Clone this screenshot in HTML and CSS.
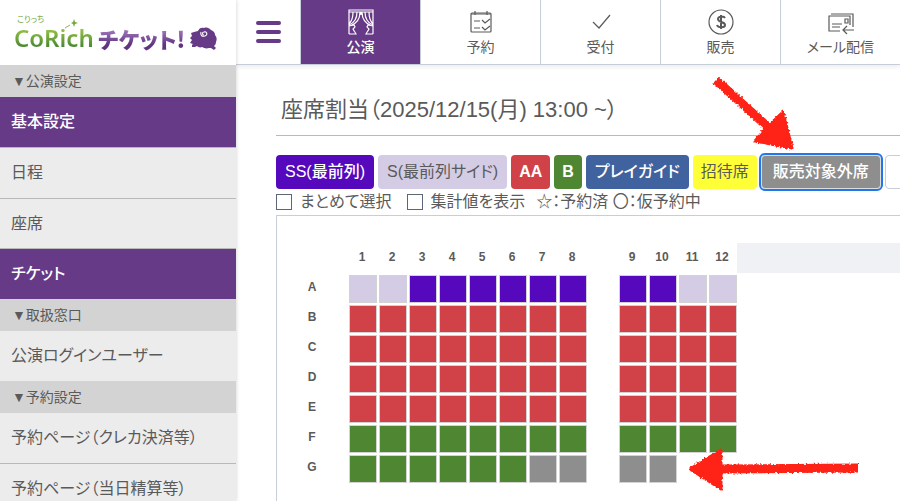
FILE: index.html
```html
<!DOCTYPE html>
<html lang="ja">
<head>
<meta charset="utf-8">
<meta name="viewport" content="width=device-width, initial-scale=1">
<title>座席割当</title>
<link rel="stylesheet" href="styles.css">
</head>
<body>
<div class="app">
  <aside class="sidebar">
    <a class="logo" href="#">
      <span class="logo-brand">
        <span class="logo-ruby">こりっち</span>
        <span class="logo-name">CoRich</span>
        <svg class="logo-wand" viewBox="0 0 14 10" aria-hidden="true"><path d="M1 9 6 6" stroke="#8db645" fill="none"/><path d="M10 0l1 3 3 1-3 1-1 3-1-3-2-1 2-1z" fill="#6fa83a"/></svg>
      </span>
      <span class="logo-product">チケット!</span>
      <svg class="logo-sheep" viewBox="0 0 28 24" aria-hidden="true">
        <path fill="#663a86" d="M1 6 4 5 8 4C9 1 12 0 14 1c3-1 5 0 7 2 3 1 4 3 4 5 2 2 2 5 1 7 0 2-1 3-2 4l2 2-2 2-3-2-2 0c-3 1-5 0-7-1-2 1-4 0-5-1l-2 1-3 0 0-2 1-1-3-1 2-3-2-2 2-2z"/>
        <path fill="none" stroke="#fff" stroke-width="1.1" d="M14 8c-2 0-2-3 0-3 3-1 4 3 1 4-3 1-5-1-4-4"/>
      </svg>
    </a>
    <nav>
      <h2 class="group">▼公演設定</h2>
      <ul class="menu">
        <li class="active"><a href="#">基本設定</a></li>
        <li><a href="#">日程</a></li>
        <li><a href="#">座席</a></li>
        <li class="active"><a href="#">チケット</a></li>
      </ul>
      <h2 class="group">▼取扱窓口</h2>
      <ul class="menu">
        <li><a href="#">公演ログインユーザー</a></li>
      </ul>
      <h2 class="group">▼予約設定</h2>
      <ul class="menu">
        <li><a href="#">予約ページ（クレカ決済等）</a></li>
        <li><a href="#">予約ページ（当日精算等）</a></li>
      </ul>
    </nav>
  </aside>

  <div class="page">
    <header class="topbar">
      <button class="burger" type="button" aria-label="メニュー"><span></span><span></span><span></span></button>
      <nav class="tabs">
        <a class="tab current" href="#">
          <svg viewBox="0 0 26 26" aria-hidden="true"><path d="M1 25V1h24v24M1 3h24M5 3c0 5-1 9-4 12M9 3c0 6-3 11-8 13M12 3c0 7-4 12-10 14M21 3c0 5 1 9 4 12M17 3c0 6 3 11 8 13M14 3c0 7 4 12 10 14M13 3v3M1 17l5-1 1 2-2 2c1 2 2 3 3 5H1M25 17l-5-1-1 2 2 2c-1 2-2 3-3 5h7"/></svg>
          <span>公演</span>
        </a>
        <a class="tab" href="#">
          <svg viewBox="0 0 26 26" aria-hidden="true"><rect x="3" y="4" width="20" height="19" rx="1"/><path d="M3 5h20M7 2v4M19 2v4M6 12h6M6 19h6M14 11l3 3 5-4M14 18l3 3 5-4"/></svg>
          <span>予約</span>
        </a>
        <a class="tab" href="#">
          <svg viewBox="0 0 26 26" aria-hidden="true"><path d="M5 13l6 6L22 6"/></svg>
          <span>受付</span>
        </a>
        <a class="tab" href="#">
          <svg viewBox="0 0 26 26" aria-hidden="true"><circle cx="13" cy="13" r="12"/><path class="bold" d="M17 9c-1-2-7-2-7 1 0 4 7 2 7 6 0 3-7 3-8 0M13 6v14"/></svg>
          <span>販売</span>
        </a>
        <a class="tab" href="#">
          <svg viewBox="0 0 26 26" aria-hidden="true"><path d="M12 22H1V7h21v9M3 5h22v13M4 15h10M4 18h8M17 10h3v4h-3zM26 21H15M19 17l-4 4 4 4"/></svg>
          <span>メール配信</span>
        </a>
      </nav>
    </header>

    <main class="content">
      <h1>座席割当（2025/12/15(月) 13:00 ~）</h1>
      <div class="kinds">
        <button type="button" class="kind wide ss">SS(最前列)</button>
        <button type="button" class="kind wide side">S(最前列サイド)</button>
        <button type="button" class="kind aa">AA</button>
        <button type="button" class="kind b">B</button>
        <button type="button" class="kind wide guide">プレイガイド</button>
        <button type="button" class="kind invite">招待席</button>
        <button type="button" class="kind closed">販売対象外席</button>
        <button type="button" class="kind blank" aria-label="なし"></button>
      </div>
      <div class="options">
        <label><input type="checkbox">まとめて選択</label>
        <label><input type="checkbox">集計値を表示</label>
        <span>☆：予約済 〇：仮予約中</span>
      </div>
      <div class="hall">
        <table class="seats">
          <thead><tr id="columns"></tr></thead>
          <tbody id="rows"></tbody>
        </table>
        <div class="rest"></div>
      </div>
    </main>
  </div>
</div>

<svg class="marks" viewBox="0 0 900 501" aria-hidden="true">
  <filter id="chalk" x="-10%" y="-30%" width="120%" height="160%">
    <feTurbulence type="fractalNoise" baseFrequency="0.5" numOctaves="2" seed="4"/>
    <feDisplacementMap in="SourceGraphic" scale="4" xChannelSelector="R" yChannelSelector="G"/>
  </filter>
  <g filter="url(#chalk)" fill="#ff2419" stroke="#ff2419">
    <path d="M716 80 769 128" stroke-width="9"/>
    <path d="M783 112 792 148 755 141 768 126z" stroke-width="3" stroke-linejoin="round"/>
  </g>
  <g filter="url(#chalk)" fill="#ff2419" stroke="#ff2419">
    <path d="M720 469 858 468" stroke-width="9"/>
    <path d="M690 469 721 450 721 489z" stroke-width="3" stroke-linejoin="round"/>
  </g>
</svg>
<script src="seats.js"></script>
</body>
</html>
```
FILE: styles.css
```css
* { box-sizing: border-box; }

body {
  margin: 0;
  background: #fff;
  color: #5a5a5a;
  font-family: "Liberation Sans", "Noto Sans CJK JP", sans-serif;
  font-size: 16px;
  font-feature-settings: "palt";
  overflow: hidden;
}

a { color: inherit; text-decoration: none; }
button { font: inherit; font-feature-settings: inherit; cursor: pointer; }

.app { display: flex; height: 100vh; overflow: hidden; }

.sidebar {
  flex: 0 0 236px;
  background: #ececec;
  box-shadow: 0 0 4px rgba(0, 0, 0, .2);
  z-index: 1;
}

.logo {
  display: flex;
  align-items: flex-end;
  height: 65px;
  padding: 0 16px 14px 14px;
  background: #fff;
  white-space: nowrap;
}
.logo-brand {
  position: relative;
  flex: 0 0 84px;
  display: flex;
  flex-direction: column;
}
.logo-ruby {
  padding-left: 3px;
  color: #6fa83a;
  font-size: 8px;
  line-height: 10px;
}
.logo-name {
  font-family: "Noto Sans", sans-serif;
  font-size: 24px;
  font-weight: 600;
  line-height: 26px;
  color: transparent;
  background: linear-gradient(#92bf42 20%, #4c8c34 80%);
  background-clip: text;
}
.logo-wand { position: absolute; left: 50px; top: 4px; width: 14px; height: 10px; }
.logo-product {
  flex: 0 0 88px;
  font-family: "Noto Sans CJK JP", sans-serif;
  font-size: 22px;
  font-weight: 900;
  line-height: 26px;
  color: transparent;
  background: linear-gradient(#a077bb 20%, #5f3482 75%);
  background-clip: text;
}
.logo-sheep { flex: none; width: 28px; height: 24px; margin-left: 4px; }

.group {
  margin: 0;
  padding-left: 12px;
  background: #d3d3d3;
  font-size: 14px;
  font-weight: 400;
  line-height: 32px;
}
.menu { margin: 0; padding: 0; list-style: none; }
.menu a { display: block; padding-left: 11px; line-height: 50px; }
.menu li + li { border-top: 1px solid #b9b9b9; }
.menu .active { background: #663a86; color: #fff; font-weight: 500; }
.menu li + .active { border-top: 0; }
.menu li:has(+ .active) { box-shadow: inset 0 -1px #b9b9b9; }

.page { flex: 1; min-width: 0; display: flex; flex-direction: column; }
.topbar {
  flex: none;
  display: flex;
  height: 65px;
  border-bottom: 1px solid #c6cfd8;
  box-shadow: 0 2px 5px rgba(0, 0, 0, .08);
}
.burger {
  flex: 0 0 64px;
  display: flex;
  flex-direction: column;
  align-items: center;
  justify-content: center;
  gap: 5px;
  border: 0;
  background: none;
}
.burger span { width: 25px; height: 4px; border-radius: 2px; background: #663a86; }
.tabs { flex: 1; display: flex; }
.tab {
  flex: 0 0 120px;
  display: flex;
  flex-direction: column;
  align-items: center;
  padding-top: 9px;
  border-left: 1px solid #c6cfd8;
  font-size: 14px;
  line-height: 24px;
}
.tab svg {
  width: 26px;
  height: 26px;
  fill: none;
  stroke: currentColor;
  stroke-width: 1.2;
}
.tab .bold { stroke-width: 2; }
.tab.current { background: #663a86; color: #fff; font-weight: 500; }

.content {
  flex: 1;
  display: flex;
  flex-direction: column;
  padding: 24px 0 0 40px;
}
h1 {
  margin: 0;
  padding: 0 0 5px 5px;
  border-bottom: 1px solid #b9b9b9;
  font-size: 22px;
  font-weight: 400;
  line-height: 41px;
  white-space: nowrap;
}

.kinds { display: flex; gap: 4px; margin-top: 19px; }
.kind {
  flex: none;
  height: 34px;
  padding: 0 8px;
  border: 0;
  border-radius: 4px;
  color: #fff;
  font-weight: 500;
  line-height: 32px;
  white-space: nowrap;
}
.wide { padding: 0 9px; }
.ss { background: #5609bc; }
.side { background: #d4cce4; color: #5a5a5a; font-weight: 400; }
.aa { background: #d04248; font-weight: 700; }
.b { background: #4e8631; font-weight: 700; }
.guide { background: #4063a0; }
.invite { background: #ffff37; color: #5a5a5a; font-weight: 400; }
.closed {
  padding: 0 11px;
  background: #8e8e8e;
  border: 1px solid #ddd;
  outline: 2px solid #2176ea;
}
.blank { width: 60px; border: 1px solid #c6cfd8; background: #fff; }

.options {
  display: flex;
  gap: 11px;
  height: 26px;
  line-height: 26px;
  white-space: nowrap;
}
.options label { display: flex; align-items: center; gap: 8px; }
.options label + label { margin-left: 4px; }
.options input {
  appearance: none;
  width: 16px;
  height: 16px;
  margin: 0;
  border: 1px solid #5c6678;
  background: #fff;
}

.hall {
  flex: 1;
  display: flex;
  align-items: flex-start;
  padding-top: 27px;
  border: solid #c6cfd8;
  border-width: 1px 0 0 1px;
}
.rest { flex: 1; height: 30px; background: #f0f1f4; }
.seats { border-collapse: collapse; table-layout: fixed; width: 460px; }
.seats th, .seats td { height: 30px; padding: 0; }
.seats th {
  font-size: 12px;
  font-weight: 700;
  line-height: 28px;
  vertical-align: top;
}
.seats thead th { width: 30px; }
.seats thead .corner { width: 70px; }
.seats td { padding: 2px 0 0 2px; }
.seat {
  display: block;
  width: 28px;
  height: 28px;
  padding: 0;
  border: 1px solid #d3d3d3;
}
.off { background: #8e8e8e; }

.marks { position: absolute; left: 0; top: 0; width: 900px; height: 501px; pointer-events: none; z-index: 2; }
```
FILE: seats.js
```js
// s: S side, x: SS, a: AA, b: B, n: not for sale, -: aisle or no seat
const kinds = { s: 'side', x: 'ss', a: 'aa', b: 'b', n: 'off' };
const plan = {
  A: 'ssxxxxxx-xxss',
  B: 'aaaaaaaa-aaaa',
  C: 'aaaaaaaa-aaaa',
  D: 'aaaaaaaa-aaaa',
  E: 'aaaaaaaa-aaaa',
  F: 'bbbbbbbb-bbbb',
  G: 'bbbbbbnn-nn--'
};
const numbers = [1, 2, 3, 4, 5, 6, 7, 8, '', 9, 10, 11, 12];
document.getElementById('columns').innerHTML =
  '<th class="corner"></th>' + numbers.map(n => `<th scope="col">${n}</th>`).join('');
document.getElementById('rows').innerHTML = Object.entries(plan).map(([row, seats]) =>
  `<tr><th scope="row">${row}</th>` + [...seats].map((s, i) =>
    s === '-' ? '<td></td>' : `<td><button type="button" class="seat ${kinds[s]}" aria-label="${row}${numbers[i]}"></button></td>`
  ).join('') + '</tr>').join('');
```
